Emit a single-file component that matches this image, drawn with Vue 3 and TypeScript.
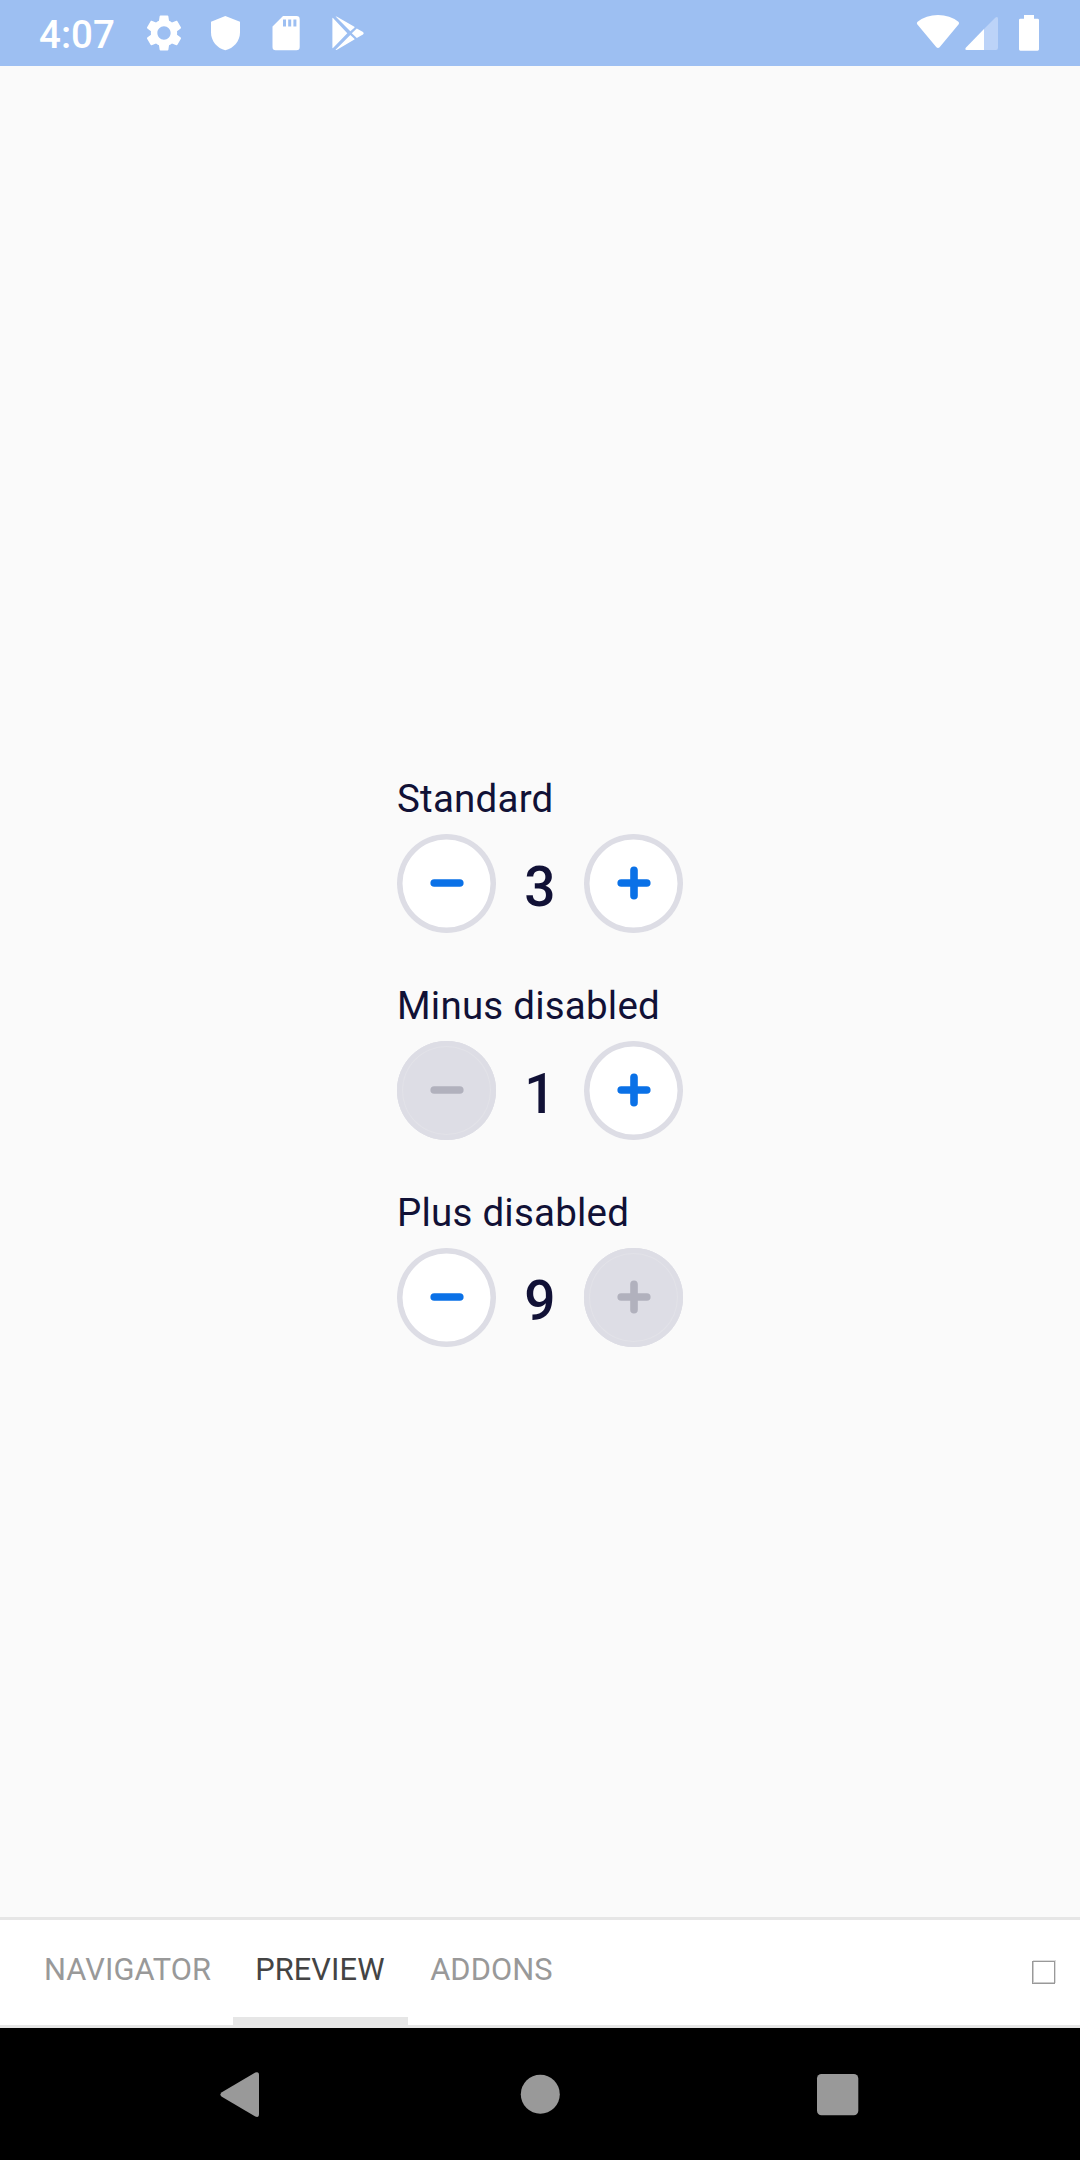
<script setup lang="ts">
interface Stepper {
  label: string
  value: number
  minusDisabled: boolean
  plusDisabled: boolean
}

const steppers: Stepper[] = [
  { label: 'Standard', value: 3, minusDisabled: false, plusDisabled: false },
  { label: 'Minus disabled', value: 1, minusDisabled: true, plusDisabled: false },
  { label: 'Plus disabled', value: 9, minusDisabled: false, plusDisabled: true },
]

const tabs = ['NAVIGATOR', 'PREVIEW', 'ADDONS']
const activeTab = 'PREVIEW'
</script>

<template>
  <div class="screen">
    <header class="status">
      <span class="time">4:07</span>
      <svg class="gear" width="42" height="42" viewBox="0 0 24 24">
        <path fill="#fff" d="M19.43 12.98c.04-.32.07-.64.07-.98s-.03-.66-.07-.98l2.11-1.65c.19-.15.24-.42.12-.64l-2-3.46c-.12-.22-.39-.3-.61-.22l-2.49 1c-.52-.4-1.08-.73-1.69-.98l-.38-2.65C14.46 2.18 14.25 2 14 2h-4c-.25 0-.46.18-.49.42l-.38 2.65c-.61.25-1.17.59-1.69.98l-2.49-1c-.23-.09-.49 0-.61.22l-2 3.46c-.13.22-.07.49.12.64l2.11 1.65c-.04.32-.07.65-.07.98s.03.66.07.98l-2.11 1.65c-.19.15-.24.42-.12.64l2 3.46c.12.22.39.3.61.22l2.49-1c.52.4 1.08.73 1.69.98l.38 2.65c.03.24.24.42.49.42h4c.25 0 .46-.18.49-.42l.38-2.65c.61-.25 1.17-.59 1.69-.98l2.49 1c.23.09.49 0 .61-.22l2-3.46c.12-.22.07-.49-.12-.64l-2.11-1.65zM12 15.8c-2.1 0-3.8-1.7-3.8-3.8s1.7-3.8 3.8-3.8 3.8 1.7 3.8 3.8-1.7 3.8-3.8 3.8z" />
      </svg>
      <svg class="shield" width="30" height="36" viewBox="0 0 30 36">
        <path fill="#fff" d="M15.3 1L30 6.8V17.500C30 26 23.500 33.500 15.300 35.300C7.300 33.500 1 26 1 17.500V6.800Z" />
      </svg>
      <svg class="sd" width="28" height="36" viewBox="0 0 28 36">
        <path fill="#fff" fill-rule="evenodd" d="M11 1H24.500Q27.700 1 27.700 4.200V32Q27.700 35.200 24.500 35.200H3.700Q.5 35.200 .5 32V11.500ZM11 4.500V11.500H14V4.500ZM16.200 4.500V11.500H19.200V4.500ZM21.400 4.500V11.500H24.400V4.500Z" />
      </svg>
      <svg class="play" width="34" height="36" viewBox="0 0 34 36">
        <g fill="#fff">
          <path d="M1.400 3Q1.400 2.300 2 3L16.300 18.200L2 33Q1.400 33.500 1.400 32.700Z" />
          <path d="M4.600 1.600Q5 1.200 6 1.800L23.400 11.800Q23.800 12.300 23.400 12.700L19.300 16.300Z" />
          <path d="M4.600 34.800Q5 35.300 6 34.700L23.400 24.500Q23.800 24.200 23.400 23.800L19.300 20Z" />
          <path d="M20.800 18.200L25.800 13.500L32 16.900Q33.500 18.200 32 19.500L25.800 22.900Z" />
        </g>
      </svg>
      <span class="spacer"></span>
      <svg class="wifi" width="44" height="36" viewBox="0 0 44 36">
        <path fill="#fff" d="M1.200 10.200Q.2 8.900 1.600 7.800Q10 1 22 1Q34 1 42.400 7.800Q43.700 8.900 42.700 10.200L23.600 33.300Q22 34.800 20.400 33.300Z" />
      </svg>
      <svg class="signal" width="34" height="36" viewBox="0 0 34 36">
        <path fill="#bcd3f8" d="M19 14L30.500 2.500Q33 .8 33 4V32.800Q33 35 31 35H19Z" />
        <path fill="#fff" d="M19 14V35H1.600Q-.5 34.500 .8 32.700Z" />
      </svg>
      <svg class="battery" width="20" height="36" viewBox="0 0 20 36">
        <path fill="#fff" d="M5 0H15V3.700H18.600Q20 3.700 20 5.100V34.300Q20 35.700 18.600 35.700H1.400Q0 35.700 0 34.300V5.100Q0 3.700 1.400 3.700H5Z" />
      </svg>
    </header>

    <main class="canvas">
      <section v-for="s in steppers" :key="s.label" class="stepper">
        <div class="label">{{ s.label }}</div>
        <div class="controls">
          <button class="round" :class="{ off: s.minusDisabled }" :disabled="s.minusDisabled">
            <svg width="35" height="35" viewBox="0 0 35 35">
              <path d="M5.200 17H30.800" />
            </svg>
          </button>
          <span class="value">{{ s.value }}</span>
          <button class="round" :class="{ off: s.plusDisabled }" :disabled="s.plusDisabled">
            <svg width="35" height="35" viewBox="0 0 35 35">
              <path d="M5.200 17H30.800M18 4.200V29.800" />
            </svg>
          </button>
        </div>
      </section>
    </main>

    <nav class="tabs">
      <div v-for="t in tabs" :key="t" class="tab" :class="{ active: t === activeTab }">{{ t }}</div>
      <span class="spacer"></span>
      <span class="box"></span>
    </nav>

    <footer class="system">
      <svg width="1080" height="132" viewBox="0 0 1080 132">
        <g fill="#999">
          <path d="M255.300 44.600Q259 43.200 259 47V86Q259 90 255.300 88.500L221.800 68.800Q219 66.500 221.800 64.200Z" />
          <circle cx="540.300" cy="66.300" r="19.500" />
          <rect x="817" y="46" width="41.300" height="41.300" rx="4.500" />
        </g>
      </svg>
    </footer>
  </div>
</template>

<style>
body {
  margin: 0;
}
</style>

<style scoped>
.screen {
  width: 1080px;
  height: 2160px;
  display: flex;
  flex-direction: column;
  overflow: hidden;
  background: #fafafa;
  font-family: Roboto, "Liberation Sans", sans-serif;
}
svg {
  display: block;
  flex: none;
}
.spacer {
  flex: 1;
}
.status {
  box-sizing: border-box;
  height: 66px;
  flex: none;
  display: flex;
  align-items: flex-start;
  padding: 0 41px 0 39px;
  background: #9dbff2;
}
.time {
  width: 104px;
  line-height: 45px;
  margin-top: 12px;
  font-size: 38.5px;
  font-weight: 500;
  color: #fff;
}
.gear {
  margin: 12px 0 0 0.4px;
}
.shield {
  margin: 15px 0 0 24.6px;
}
.sd {
  margin: 15px 0 0 32px;
}
.play {
  margin: 15px 0 0 31px;
}
.wifi {
  margin: 14px 5px 0 0;
}
.signal {
  margin: 15px 20px 0 0;
}
.battery {
  margin-top: 15px;
}
.canvas {
  flex: 1;
  display: flex;
  flex-direction: column;
  align-items: center;
  justify-content: center;
  padding-top: 134px;
  gap: 44px;
}
.stepper {
  width: 286px;
  height: 163px;
}
.label {
  height: 64px;
  line-height: 58px;
  font-size: 38.5px;
  letter-spacing: 0.22px;
  color: #111136;
  white-space: nowrap;
}
.controls {
  display: flex;
  align-items: center;
  justify-content: space-between;
}
.round {
  box-sizing: border-box;
  width: 99px;
  height: 99px;
  padding: 0;
  display: flex;
  align-items: center;
  justify-content: center;
  border: 0;
  border-radius: 50%;
  background: #fff;
  box-shadow: inset 0 0 0 5.5px #dddde5;
}
.round path {
  fill: none;
  stroke: #0a71e7;
  stroke-width: 7.6;
  stroke-linecap: round;
}
.off {
  background: #dddde5;
  box-shadow: inset 0 0 0 5px #dddde5, inset 0 0 0 6px #e2e2e8;
}
.off path {
  stroke: #b1b1bd;
}
.value {
  font-size: 55px;
  line-height: 66px;
  font-weight: 500;
  color: #111136;
  padding-top: 7px;
}
.tabs {
  box-sizing: border-box;
  height: 111px;
  flex: none;
  display: flex;
  align-items: stretch;
  padding: 0 25px 0 22px;
  border-top: 3px solid #e6e6e6;
  background: linear-gradient(#e6e6e6, #e6e6e6) bottom / 100% 3px no-repeat #fff;
}
.tab {
  box-sizing: border-box;
  padding: 0 22px;
  line-height: 100px;
  font-size: 30.8px;
  letter-spacing: 0.1px;
  color: #999;
  border-bottom: 11px solid transparent;
}
.active {
  min-width: 175px;
  color: #444;
  border-bottom-color: #e6e6e6;
}
.box {
  box-sizing: border-box;
  width: 23px;
  height: 23px;
  margin-top: 41px;
  border: 1px solid #999;
  box-shadow: 1px -1px 0 #ddd, inset 1px -1px 0 #ccc;
}
.system {
  height: 132px;
  flex: none;
  background: #000;
}
</style>
